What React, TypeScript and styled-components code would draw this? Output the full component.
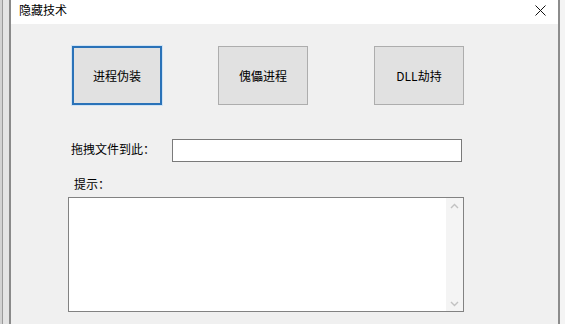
import React from "react";
import styled, {createGlobalStyle} from "styled-components";

const GlobalStyle = createGlobalStyle`
  html, body {
    margin: 0;
    padding: 0;
    background: #f0f0f0;
  }

  body {
    font-family: "Noto Sans CJK SC", "Microsoft YaHei", sans-serif;
    font-size: 12px;
    color: #000;
  }
`;

const Screen = styled.div`
  width: 565px;
  height: 324px;
  display: flex;
  overflow: hidden;
`;

const BackStrip = styled.div`
  width: 11px;
  flex: none;
  box-sizing: border-box;
  background: #e4e4e4;
  border-left: 2px solid #d2d2d2;
  border-right: 2px solid #8a8a8a;
  box-shadow: inset 1px 0 0 #9a9a9a;
`;

const Window = styled.div`
  flex: 1;
  display: flex;
  flex-direction: column;
  background: #f0f0f0;
  border-right: 2px solid #8c8c8c;
`;

const RightStrip = styled.div`
  width: 5px;
  flex: none;
  background: #f4f4f4;
`;

const TitleBar = styled.div`
  height: 24px;
  flex: none;
  background: #fff;
  display: flex;
  align-items: center;
  justify-content: space-between;
  padding-left: 8px;
  padding-right: 6px;
`;

const Title = styled.span`
  font-size: 12px;
  line-height: 16px;
  margin-top: -4px;
`;

const CloseBox = styled.div`
  width: 24px;
  height: 20px;
  display: flex;
  align-items: center;
  justify-content: center;
  margin-top: -4px;
`;

const Body = styled.div`
  flex: 1;
  display: flex;
  flex-direction: column;
  padding: 22px 0 0 57px;
`;

const ButtonRow = styled.div`
  display: flex;
  padding-left: 4px;
`;

const ActionButton = styled.div<{ $focused?: boolean; $ml?: number }>`
  width: 90px;
  height: 59px;
  box-sizing: border-box;
  margin-left: ${p => p.$ml ?? 0}px;
  background: #e1e1e1;
  border: ${p => (p.$focused ? "2px solid #2a72b8" : "1px solid #adadad")};
  box-shadow: ${p => (p.$focused ? "0 0 0 1px #cfe3f5" : "none")};
  display: flex;
  align-items: center;
  justify-content: center;
  font-size: 12px;
`;

const FieldRow = styled.div`
  display: grid;
  grid-template-columns: 104px 290px;
  align-items: center;
  margin-top: 34px;
`;

const Label = styled.span<{ $indent?: number }>`
  font-size: 12px;
  line-height: 16px;
  padding-left: ${p => p.$indent ?? 0}px;
`;

const FieldLabel = styled(Label)`
  margin-top: -3px;
`;

const PathInput = styled.div`
  height: 23px;
  box-sizing: border-box;
  background: #fff;
  border: 1px solid #7a7a7a;
`;

const HintLabel = styled(Label)`
  margin-top: 14px;
`;

const HintBox = styled.div`
  width: 396px;
  height: 115px;
  box-sizing: border-box;
  margin-top: 5px;
  background: #fff;
  border: 1px solid #828282;
  display: flex;
  justify-content: flex-end;
`;

const ScrollTrack = styled.div`
  width: 17px;
  background: #f4f4f4;
  display: flex;
  flex-direction: column;
  justify-content: space-between;
  align-items: center;
  padding: 5px 0 4px;
`;

function Chevron({up}: { up?: boolean }) {
    return (
        <svg width="9" height="6" viewBox="0 0 9 6">
            <path d={up ? "M1 5 L4.5 1.5 L8 5" : "M1 1 L4.5 4.5 L8 1"}
                  stroke="#c2c2c2" strokeWidth="1.4" fill="none"/>
        </svg>
    );
}

export default function App() {
    return (
        <Screen>
            <GlobalStyle/>
            <BackStrip/>
            <Window>
                <TitleBar>
                    <Title>隐藏技术</Title>
                    <CloseBox>
                        <svg width="11" height="11" viewBox="0 0 11 11">
                            <path d="M0.5 0.5 L10.5 10.5 M10.5 0.5 L0.5 10.5" stroke="#111" strokeWidth="1"/>
                        </svg>
                    </CloseBox>
                </TitleBar>
                <Body>
                    <ButtonRow>
                        <ActionButton $focused>进程伪装</ActionButton>
                        <ActionButton $ml={56}>傀儡进程</ActionButton>
                        <ActionButton $ml={66}>DLL劫持</ActionButton>
                    </ButtonRow>
                    <FieldRow>
                        <FieldLabel $indent={3}>拖拽文件到此：</FieldLabel>
                        <PathInput/>
                    </FieldRow>
                    <HintLabel $indent={6}>提示：</HintLabel>
                    <HintBox>
                        <ScrollTrack>
                            <Chevron up/>
                            <Chevron/>
                        </ScrollTrack>
                    </HintBox>
                </Body>
            </Window>
            <RightStrip/>
        </Screen>
    );
}
